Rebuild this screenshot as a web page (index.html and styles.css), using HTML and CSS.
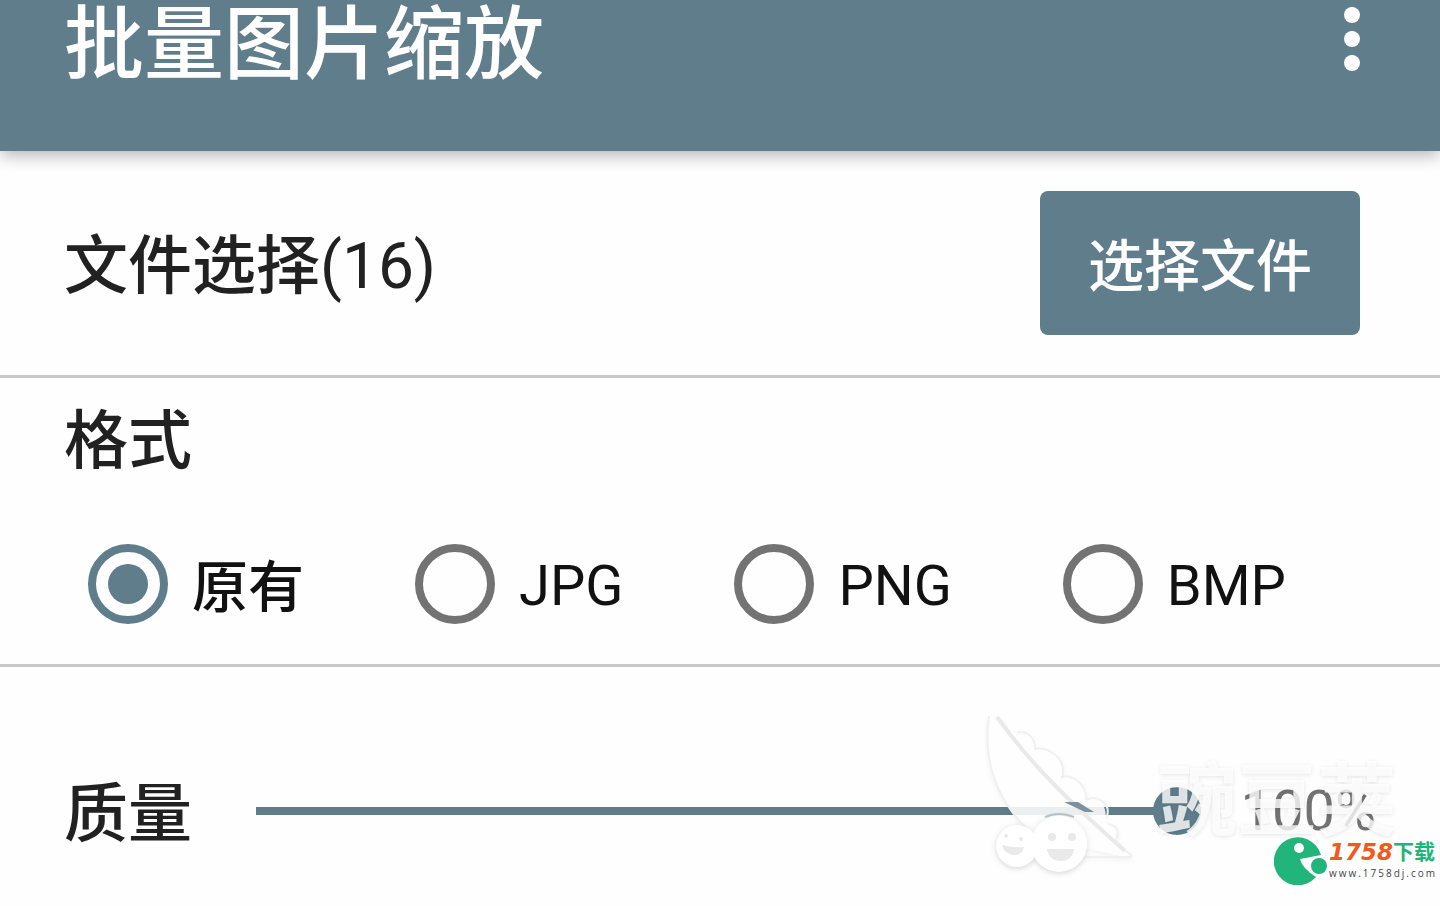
FILE: index.html
```
<!DOCTYPE html>
<html lang="zh-CN">
<head>
  <meta charset="utf-8">
  <meta name="viewport" content="width=device-width, initial-scale=1">
  <title>批量图片缩放</title>
  <link rel="stylesheet" href="styles.css">
</head>
<body>
  <header class="toolbar">
    <h1 class="title">批量图片缩放</h1>
    <button class="menu-btn" type="button" aria-label="更多">
      <svg width="16" height="64" viewBox="0 0 16 64" fill="currentColor">
        <circle cx="8" cy="8" r="8"/>
        <circle cx="8" cy="32" r="8"/>
        <circle cx="8" cy="56" r="8"/>
      </svg>
    </button>
  </header>

  <main>
    <section class="files">
      <h2 class="label">文件选择<span class="count">(16)</span></h2>
      <button class="btn" type="button">选择文件</button>
    </section>

    <section class="format">
      <h2 class="label">格式</h2>
      <div class="options">
        <label class="option"><input type="radio" name="format" checked><span class="option-text cjk">原有</span></label>
        <label class="option"><input type="radio" name="format"><span class="option-text">JPG</span></label>
        <label class="option"><input type="radio" name="format"><span class="option-text">PNG</span></label>
        <label class="option"><input type="radio" name="format"><span class="option-text">BMP</span></label>
      </div>
    </section>

    <section class="quality">
      <label class="label" for="quality">质量</label>
      <input class="slider" type="range" id="quality" min="0" max="100" value="100">
      <output class="value" for="quality">100%</output>

      <div class="watermark">
        <svg class="pod" width="150" height="170" viewBox="0 0 150 170">
          <!-- shell with the peas behind its open edge -->
          <path d="M6 6C1 42 9 78 34 108C39 115 47 119 51 127L142 147C151 148 150 145 142 141L133 132C137 121 133 115 122 113C126 93 113 84 103 90C104 75 90 64 79 67C82 60 79 49 71 44Q62 37 52 39C53 30 45 20 34 26L14 8Z" fill="#fff" fill-opacity=".88"/>
          <g fill="none" stroke="#f0f0f0" stroke-width="2">
            <path d="M6 6C1 42 9 78 34 108C39 115 47 119 51 127M96 147L142 147C151 148 150 145 142 141"/>
            <path d="M34 22C45 20 53 30 52 39Q62 37 71 44C79 49 82 60 79 67C90 64 104 75 103 90C113 84 128 93 124 106M125 114C133 115 137 121 133 130"/>
          </g>
          <path d="M14 7C43 47 73 80 142 141" fill="none" stroke="#e9e9e9" stroke-width="4"/>
          <path d="M83 91L97 91L113 101L104 101Z" transform="translate(-2 1)" fill="#7b929d"/>
          <!-- smiling peas -->
          <g class="peas" fill="#fff">
            <circle cx="34" cy="136" r="21"/>
            <circle cx="76" cy="134" r="28"/>
          </g>
          <path d="M62 107Q76 101 91 107" fill="none" stroke="#b4c0c5" stroke-width="2"/>
          <g fill="#e9e9e9">
            <circle cx="23" cy="126" r="2"/>
            <circle cx="38" cy="129" r="2"/>
            <path d="M19 135Q30 138 41 137Q39 146 30 145Q21 143 19 135Z"/>
            <circle cx="69" cy="127" r="4"/>
            <circle cx="89" cy="127" r="4"/>
            <path d="M64 139H91Q89 151 78 151Q66 151 64 139Z"/>
          </g>
        </svg>
        <span class="watermark-text">豌豆荚</span>
      </div>

      <div class="site">
        <svg width="54" height="48" viewBox="0 0 54 48">
          <path d="M42 40A24 24 0 1 1 47 18L26 22Q28 31 42 40Z" fill="#21b57b"/>
          <circle cx="25" cy="11" r="5" fill="#fff"/>
          <circle cx="45" cy="29" r="8" fill="#21b57b"/>
        </svg>
        <div class="site-text">
          <div class="site-name"><span class="site-num">1758</span>下载</div>
          <div class="site-url">www.1758dj.com</div>
        </div>
      </div>
    </section>
  </main>
</body>
</html>
```
FILE: styles.css
```
* {
  box-sizing: border-box;
}

body {
  margin: 0;
  background: #fefefe;
  color: #212121;
  font-family: Roboto, "Noto Sans CJK SC", sans-serif;
}

h1,
h2 {
  margin: 0;
}

.toolbar {
  display: flex;
  justify-content: space-between;
  align-items: flex-start;
  padding: 0 80px 61px 64px;
  background: #607d8b;
  color: #fff;
  box-shadow: 0 4px 16px rgba(0, 0, 0, 0.3);
}

.title {
  font-size: 80px;
  font-weight: 500;
  line-height: 90px;
}

.menu-btn {
  display: flex;
  padding: 7px 0 0;
  border: none;
  background: none;
  color: inherit;
  cursor: pointer;
}

.files {
  display: flex;
  justify-content: space-between;
  align-items: center;
  padding: 40px 80px 40px 64px;
  border-bottom: 3px solid #c8c8c8;
}

.label {
  padding-top: 8px;
  font-size: 64px;
  font-weight: 500;
  line-height: 80px;
}

.count {
  font-weight: normal;
}

.btn {
  padding: 36px 48px 28px;
  border: none;
  border-radius: 8px;
  background: #607d8b;
  color: #fff;
  font-family: inherit;
  font-size: 56px;
  font-weight: 500;
  line-height: 80px;
  cursor: pointer;
}

.format {
  padding: 16px 64px 38px;
  border-bottom: 3px solid #c8c8c8;
}

.options {
  display: flex;
  gap: 111px;
  padding: 60px 24px 0;
}

.option {
  display: flex;
  align-items: center;
  gap: 24px;
  color: #111;
  font-size: 56px;
  line-height: 80px;
  white-space: nowrap;
}

.option-text {
  padding-top: 4px;
}

.cjk {
  padding-top: 8px;
  line-height: 76px;
  font-weight: 500;
}

.option input {
  appearance: none;
  width: 80px;
  height: 80px;
  margin: 0;
  padding: 12px;
  border: 8px solid #737373;
  border-radius: 50%;
}

.option input:checked {
  border-color: #607d8b;
}

.option input:checked::before {
  content: "";
  display: block;
  width: 40px;
  height: 40px;
  border-radius: 50%;
  background: #607d8b;
}

.quality {
  position: relative;
  display: flex;
  align-items: center;
  padding: 100px 64px 48px;
}

.slider {
  appearance: none;
  flex: 1;
  min-width: 0;
  height: 48px;
  margin: 0 40px 0 64px;
  background: linear-gradient(#607d8b, #607d8b) center / 100% 8px no-repeat;
}

.slider::-webkit-slider-thumb {
  appearance: none;
  width: 48px;
  height: 48px;
  border-radius: 50%;
  background: #607d8b;
}

.value {
  color: #737373;
  font-size: 56px;
  line-height: 80px;
}

/* watermark over the quality row */
.watermark {
  position: absolute;
  top: 43px;
  right: 43px;
  display: flex;
  align-items: flex-start;
  gap: 24px;
  pointer-events: none;
}

.pod {
  filter: drop-shadow(0 2px 2px rgba(0, 0, 0, 0.05));
}

.peas {
  filter: drop-shadow(0 1px 3px rgba(0, 0, 0, 0.12));
}

.watermark-text {
  padding-top: 52px;
  color: rgba(255, 255, 255, 0.8);
  font-size: 80px;
  font-weight: bold;
  line-height: 80px;
  text-shadow: 0 1px 4px rgba(0, 0, 0, 0.1);
}

.site {
  position: absolute;
  top: 170px;
  right: 3px;
  display: flex;
  align-items: center;
  gap: 1px;
}

.site-name {
  display: flex;
  color: #21b57b;
  font-size: 21px;
  font-weight: bold;
  line-height: 24px;
}

.site-num {
  color: #f4581c;
  font-family: "DejaVu Sans", sans-serif;
  font-size: 23px;
  font-style: italic;
}

.site-url {
  color: #444;
  font-family: "Open Sans", sans-serif;
  font-size: 10px;
  letter-spacing: 2px;
  line-height: 18px;
}
```
